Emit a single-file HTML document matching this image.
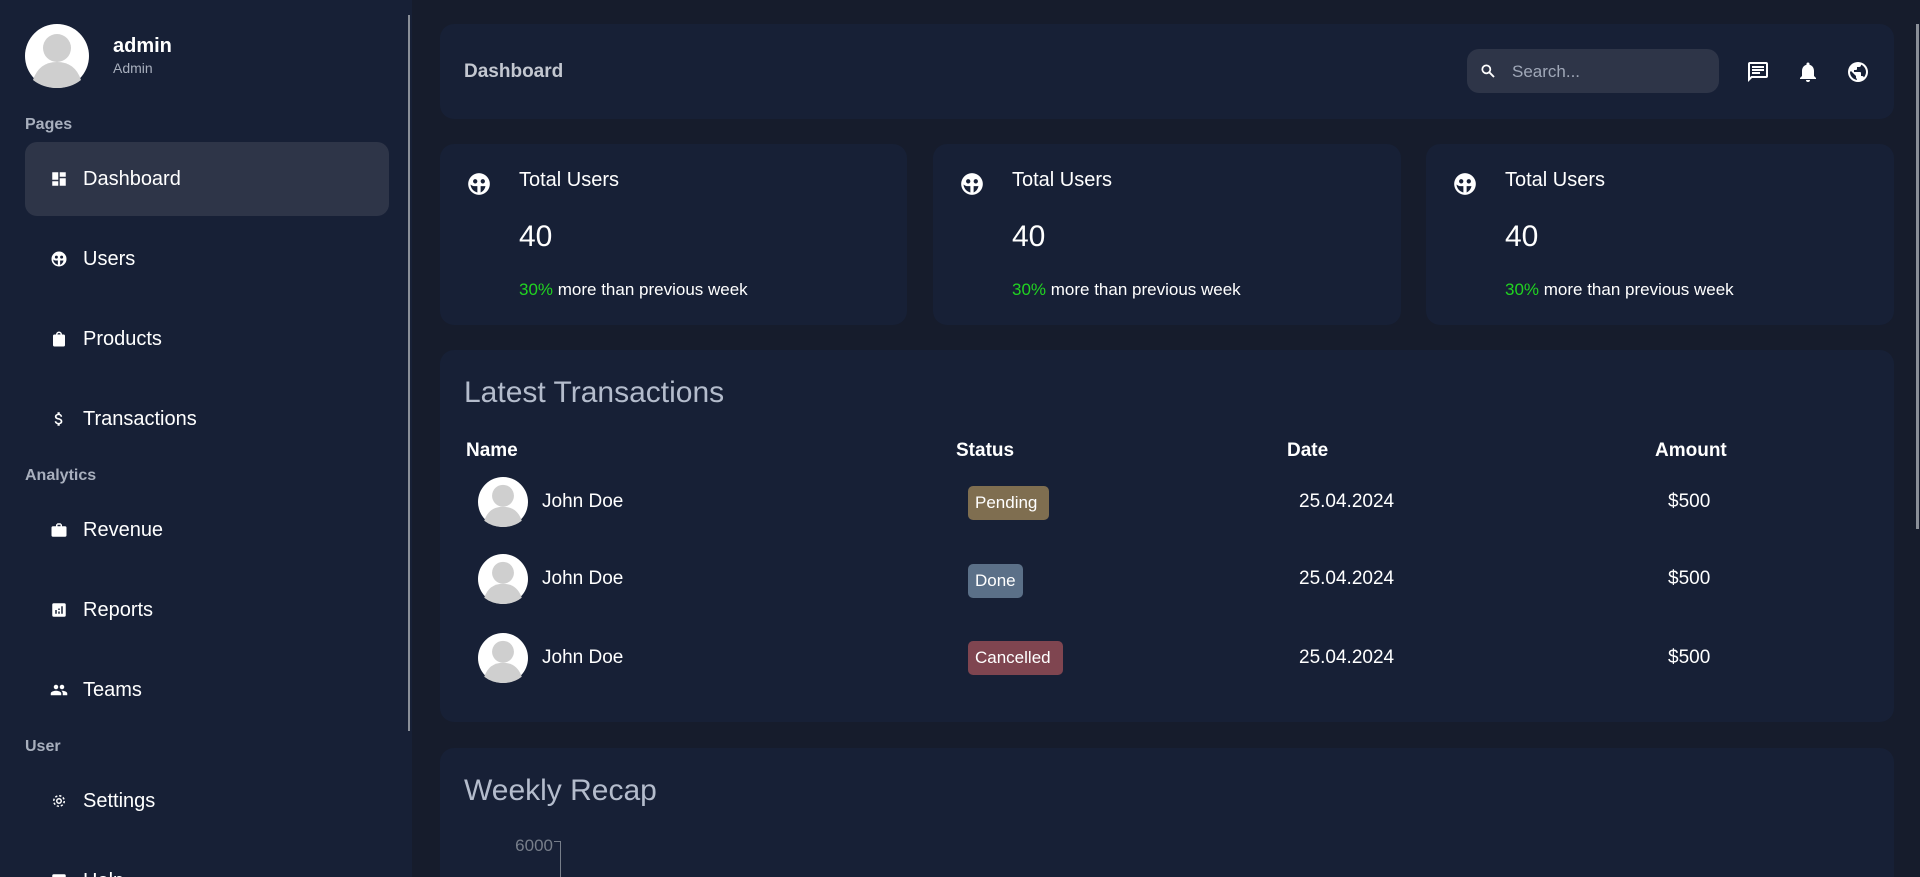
<!DOCTYPE html>
<html style="overflow:hidden;height:877px"><head><meta charset="utf-8"><style>
*{box-sizing:border-box;margin:0;padding:0}
html,body{width:1920px;height:877px;overflow:hidden}
body{background:#161c2c;font-family:"Liberation Sans",sans-serif;color:#fff;position:relative}
.a{position:absolute;white-space:nowrap}
.side{left:0;top:0;width:412px;height:877px;background:#172036}
.card{background:#172036;border-radius:14px}
.lbl{font-weight:bold;font-size:16px;color:#a8afbd;left:25px}
.item{left:25px;width:364px;height:74px;border-radius:12px;display:flex;align-items:center;font-size:20px}
.item svg{margin-left:25px;margin-right:15px;width:18px;height:18px;fill:#fff}
.th{font-weight:bold;font-size:19px}
.td{font-size:19px}
.badge{font-size:17px;height:34px;line-height:34px;padding:0 7px;border-radius:5px}
</style></head><body>
<div class="a side"></div>
<div class="a" style="left:408px;top:15px;width:2px;height:716px;background:#8a8f98"></div>
<div class="a" style="left:1916px;top:24px;width:3px;height:505px;background:#8a8f98"></div>
<svg class="a" style="left:25px;top:24px" width="64" height="64" viewBox="0 0 64 64"><circle cx="32" cy="32" r="32" fill="#fff"/><circle cx="32" cy="24" r="14" fill="#cfcfcf"/><path d="M8 56 Q14 38 32 38 Q50 38 56 56 Q46 64 32 64 Q18 64 8 56Z" fill="#cfcfcf"/></svg>
<div class="a" style="left:113px;top:35px;font-size:20px;font-weight:bold">admin</div>
<div class="a" style="left:113px;top:60px;font-size:14px;color:#a8afbd">Admin</div>
<div class="a lbl" style="top:116px">Pages</div>
<div class="a item" style="top:142px;background:#2e3548"><svg viewBox="0 0 24 24"><path d="M3 13h8V3H3zm0 8h8v-6H3zm10 0h8V11h-8zm0-18v6h8V3z"/></svg>Dashboard</div>
<div class="a item" style="top:222px"><svg viewBox="0 0 24 24"><path d="M12 2a10 10 0 100 20 10 10 0 000-20zM8.5 7.5a2 2 0 110 4 2 2 0 010-4zm7 0a2 2 0 110 4 2 2 0 010-4zM10.5 19.8A8 8 0 014.2 12.5 6 6 0 007 14h3.5zm3 0V14H18a8 8 0 01-4.5 5.8z"/></svg>Users</div>
<div class="a item" style="top:302px"><svg viewBox="0 0 24 24"><path d="M18 6h-2a4 4 0 00-8 0H6a2 2 0 00-2 2v12a2 2 0 002 2h12a2 2 0 002-2V8a2 2 0 00-2-2zm-6-2a2 2 0 012 2h-4a2 2 0 012-2z"/></svg>Products</div>
<div class="a item" style="top:382px"><svg viewBox="0 0 24 24"><path d="M11.8 10.9c-2.3-.6-3-1.2-3-2.1 0-1.1 1-1.9 2.7-1.9 1.8 0 2.4.8 2.5 2.1h2.2c-.1-1.700-1.100-3.300-3.200-3.800V3h-3v2.2C8.1 5.6 6.5 6.9 6.5 8.8c0 2.3 1.9 3.4 4.7 4.1 2.5.6 3 1.5 3 2.4 0 .7-.5 1.8-2.7 1.8-2.1 0-2.9-.9-3-2.1H6.3c.1 2.2 1.8 3.5 3.7 3.9V21h3v-2.1c1.9-.4 3.5-1.5 3.5-3.6 0-2.8-2.4-3.8-4.7-4.4z"/></svg>Transactions</div>
<div class="a lbl" style="top:467px">Analytics</div>
<div class="a item" style="top:493px"><svg viewBox="0 0 24 24"><path d="M20 7h-4V5l-2-2h-4L8 5v2H4a2 2 0 00-2 2v10a2 2 0 002 2h16a2 2 0 002-2V9a2 2 0 00-2-2zm-6 0h-4V5h4z"/></svg>Revenue</div>
<div class="a item" style="top:573px"><svg viewBox="0 0 24 24"><path d="M19 3H5a2 2 0 00-2 2v14a2 2 0 002 2h14a2 2 0 002-2V5a2 2 0 00-2-2zM9 17H7v-5h2zm4 0h-2v-3h2zm0-5h-2v-2h2zm4 5h-2V7h2z"/></svg>Reports</div>
<div class="a item" style="top:653px"><svg viewBox="0 0 24 24"><path d="M16 11a3 3 0 100-6 3 3 0 000 6zm-8 0a3 3 0 100-6 3 3 0 000 6zm0 2c-2.3 0-7 1.2-7 3.5V19h14v-2.5C15 14.2 10.3 13 8 13zm8 0h-1c1.2.8 2 2 2 3.5V19h6v-2.5c0-2.3-4.7-3.5-7-3.5z"/></svg>Teams</div>
<div class="a lbl" style="top:738px">User</div>
<div class="a item" style="top:764px"><svg viewBox="0 0 24 24"><circle cx="12" cy="12" r="3" fill="none" stroke="#fff" stroke-width="2"/><circle cx="12" cy="12" r="7" fill="none" stroke="#fff" stroke-width="2" stroke-dasharray="3 2.5"/></svg>Settings</div>
<div class="a item" style="top:844px"><svg viewBox="0 0 24 24"><rect x="3" y="3" width="18" height="18" rx="2"/></svg>Help</div>

<div class="a card" style="left:440px;top:24px;width:1454px;height:95px"></div>
<div class="a" style="left:464px;top:61px;font-size:19px;font-weight:bold;color:#c3c7d0">Dashboard</div>
<div class="a" style="left:1467px;top:49px;width:252px;height:44px;border-radius:12px;background:#2e3548"></div>
<svg class="a" style="left:1480px;top:63px" width="16" height="16" viewBox="0 0 24 24"><circle cx="9.5" cy="9.5" r="6" fill="none" stroke="#fff" stroke-width="2.6"/><path d="M14 14l7 7" stroke="#fff" stroke-width="2.8"/></svg>
<div class="a" style="left:1512px;top:62px;font-size:17px;color:#a0a8b8">Search...</div>
<svg class="a" style="left:1746px;top:60px" width="24" height="24" viewBox="0 0 24 24" fill="#fff"><path d="M20 2H4a2 2 0 00-2 2v18l4-4h14a2 2 0 002-2V4a2 2 0 00-2-2zm0 14H5.2L4 17.2V4h16zM6 12h8v2H6zm0-3h12v2H6zm0-3h12v2H6z"/></svg>
<svg class="a" style="left:1796px;top:60px" width="24" height="24" viewBox="0 0 24 24" fill="#fff"><path d="M12 22a2 2 0 002-2h-4a2 2 0 002 2zm6-6v-5c0-3.1-1.6-5.6-4.5-6.3V4a1.5 1.5 0 00-3 0v.7C7.6 5.4 6 7.9 6 11v5l-2 2v1h16v-1z"/></svg>
<svg class="a" style="left:1846px;top:60px" width="24" height="24" viewBox="0 0 24 24" fill="#fff"><path d="M12 2a10 10 0 100 20 10 10 0 000-20zm-1 17.9A8 8 0 014 12l1-1 5 5v1a2 2 0 001 2zm6.9-2.5A2 2 0 0016 16h-1v-3a1 1 0 00-1-1H8v-2h2a1 1 0 001-1V7h2a2 2 0 002-2v-.4a8 8 0 012.9 12.8z"/></svg>

<div class="a card" style="left:440px;top:144px;width:467px;height:181px"></div>
<div class="a card" style="left:933px;top:144px;width:468px;height:181px"></div>
<div class="a card" style="left:1426px;top:144px;width:468px;height:181px"></div>
<div class="a" style="left:0;top:0;width:1920px">
<svg class="a" style="left:466px;top:171px" width="26" height="26" viewBox="0 0 24 24" fill="#fff"><path d="M12 2a10 10 0 100 20 10 10 0 000-20zM8.5 7.5a2 2 0 110 4 2 2 0 010-4zm7 0a2 2 0 110 4 2 2 0 010-4zM10.5 19.8A8 8 0 014.2 12.5 6 6 0 007 14h3.5zm3 0V14H18a8 8 0 01-4.5 5.8z"/></svg>
<div class="a" style="left:519px;top:169px;font-size:20px">Total Users</div>
<div class="a" style="left:519px;top:220px;font-size:30px">40</div>
<div class="a" style="left:519px;top:280px;font-size:17px"><span style="color:#21d321">30%</span> more than previous week</div>
</div>
<div class="a" style="left:493px;top:0;width:1000px">
<svg class="a" style="left:466px;top:171px" width="26" height="26" viewBox="0 0 24 24" fill="#fff"><path d="M12 2a10 10 0 100 20 10 10 0 000-20zM8.5 7.5a2 2 0 110 4 2 2 0 010-4zm7 0a2 2 0 110 4 2 2 0 010-4zM10.5 19.8A8 8 0 014.2 12.5 6 6 0 007 14h3.5zm3 0V14H18a8 8 0 01-4.5 5.8z"/></svg>
<div class="a" style="left:519px;top:169px;font-size:20px">Total Users</div>
<div class="a" style="left:519px;top:220px;font-size:30px">40</div>
<div class="a" style="left:519px;top:280px;font-size:17px"><span style="color:#21d321">30%</span> more than previous week</div>
</div>
<div class="a" style="left:986px;top:0;width:900px">
<svg class="a" style="left:466px;top:171px" width="26" height="26" viewBox="0 0 24 24" fill="#fff"><path d="M12 2a10 10 0 100 20 10 10 0 000-20zM8.5 7.5a2 2 0 110 4 2 2 0 010-4zm7 0a2 2 0 110 4 2 2 0 010-4zM10.5 19.8A8 8 0 014.2 12.5 6 6 0 007 14h3.5zm3 0V14H18a8 8 0 01-4.5 5.8z"/></svg>
<div class="a" style="left:519px;top:169px;font-size:20px">Total Users</div>
<div class="a" style="left:519px;top:220px;font-size:30px">40</div>
<div class="a" style="left:519px;top:280px;font-size:17px"><span style="color:#21d321">30%</span> more than previous week</div>
</div>

<div class="a card" style="left:440px;top:350px;width:1454px;height:372px"></div>
<div class="a" style="left:464px;top:376px;font-size:30px;color:#b4bccc">Latest Transactions</div>
<div class="a th" style="left:466px;top:440px">Name</div>
<div class="a th" style="left:956px;top:440px">Status</div>
<div class="a th" style="left:1287px;top:440px">Date</div>
<div class="a th" style="left:1655px;top:440px">Amount</div>

<svg class="a" style="left:478px;top:477px" width="50" height="50" viewBox="0 0 64 64"><circle cx="32" cy="32" r="32" fill="#fff"/><circle cx="32" cy="24" r="14" fill="#cfcfcf"/><path d="M8 56 Q14 38 32 38 Q50 38 56 56 Q46 64 32 64 Q18 64 8 56Z" fill="#cfcfcf"/></svg>
<div class="a td" style="left:542px;top:491px">John Doe</div>
<div class="a badge" style="left:968px;top:486px;background:#7f6e50;width:81px">Pending</div>
<div class="a td" style="left:1299px;top:491px">25.04.2024</div>
<div class="a td" style="left:1668px;top:491px">$500</div>

<svg class="a" style="left:478px;top:554px" width="50" height="50" viewBox="0 0 64 64"><circle cx="32" cy="32" r="32" fill="#fff"/><circle cx="32" cy="24" r="14" fill="#cfcfcf"/><path d="M8 56 Q14 38 32 38 Q50 38 56 56 Q46 64 32 64 Q18 64 8 56Z" fill="#cfcfcf"/></svg>
<div class="a td" style="left:542px;top:568px">John Doe</div>
<div class="a badge" style="left:968px;top:564px;background:#5b7088">Done</div>
<div class="a td" style="left:1299px;top:568px">25.04.2024</div>
<div class="a td" style="left:1668px;top:568px">$500</div>

<svg class="a" style="left:478px;top:633px" width="50" height="50" viewBox="0 0 64 64"><circle cx="32" cy="32" r="32" fill="#fff"/><circle cx="32" cy="24" r="14" fill="#cfcfcf"/><path d="M8 56 Q14 38 32 38 Q50 38 56 56 Q46 64 32 64 Q18 64 8 56Z" fill="#cfcfcf"/></svg>
<div class="a td" style="left:542px;top:647px">John Doe</div>
<div class="a badge" style="left:968px;top:641px;background:#7f4550;width:95px">Cancelled</div>
<div class="a td" style="left:1299px;top:647px">25.04.2024</div>
<div class="a td" style="left:1668px;top:647px">$500</div>

<div class="a card" style="left:440px;top:748px;width:1454px;height:129px;border-radius:14px 14px 0 0"></div>
<div class="a" style="left:464px;top:774px;font-size:30px;color:#b4bccc">Weekly Recap</div>
<div class="a" style="left:495px;top:836px;font-size:17px;color:#777e8a;width:58px;text-align:right">6000</div>
<div class="a" style="left:554px;top:841px;width:7px;height:1px;background:#777e8a"></div>
<div class="a" style="left:560px;top:841px;width:1px;height:36px;background:#777e8a"></div>
</body></html>
